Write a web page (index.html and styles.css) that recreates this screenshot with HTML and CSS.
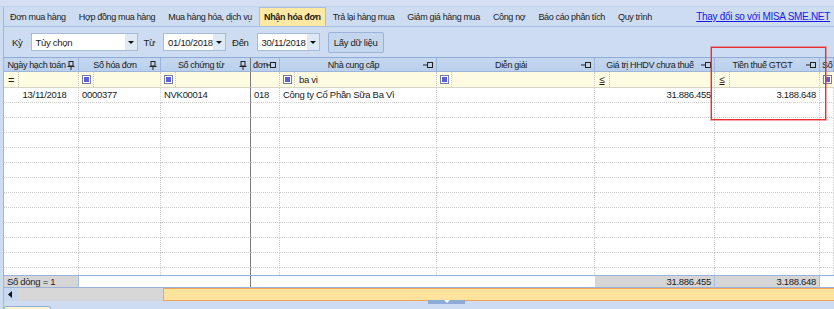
FILE: index.html
```html
<!DOCTYPE html>
<html>
<head>
	<title>Nhận hóa đơn</title>
	<link rel="stylesheet" href="styles.css">
</head>
<body>
	<div class="topStrip"></div>
	<div class="frame">
		<div class="tabs">
			<span class="tab">Đơn mua hàng</span>
			<span class="tab">Hợp đồng mua hàng</span>
			<span class="tab">Mua hàng hóa, dịch vụ</span>
			<span class="tab active">Nhận hóa đơn</span>
			<span class="tab">Trả lại hàng mua</span>
			<span class="tab">Giảm giá hàng mua</span>
			<span class="tab">Công nợ</span>
			<span class="tab">Báo cáo phân tích</span>
			<span class="tab">Quy trình</span>
			<a class="misaLink" href="#">Thay đổi so với MISA SME.NET</a>
		</div>

		<div class="toolbar">
			<label class="lbl">Kỳ</label>
			<div class="combo cKy"><span>Tùy chọn</span><i class="drop"></i></div>
			<label class="lbl">Từ</label>
			<div class="combo cDate"><span>01/10/2018</span><i class="drop"></i></div>
			<label class="lbl">Đến</label>
			<div class="combo cDate"><span>30/11/2018</span><i class="drop"></i></div>
			<button class="btn">Lấy dữ liệu</button>
		</div>

		<div class="grid">
			<div class="row head">
				<div class="hc"><span>Ngày hạch toán</span><svg class="pin" width="8" height="9" viewBox="0 0 8 9"><rect x="2" y="0.5" width="4" height="4.5" fill="none" stroke="#222"/><line x1="0.5" y1="5.5" x2="7.5" y2="5.5" stroke="#222"/><line x1="4" y1="5.5" x2="4" y2="9" stroke="#222"/></svg></div>
				<div class="hc"><span>Số hóa đơn</span><svg class="pin" width="8" height="9" viewBox="0 0 8 9"><rect x="2" y="0.5" width="4" height="4.5" fill="none" stroke="#222"/><line x1="0.5" y1="5.5" x2="7.5" y2="5.5" stroke="#222"/><line x1="4" y1="5.5" x2="4" y2="9" stroke="#222"/></svg></div>
				<div class="hc fix"><span>Số chứng từ</span><svg class="pin" width="8" height="9" viewBox="0 0 8 9"><rect x="2" y="0.5" width="4" height="4.5" fill="none" stroke="#222"/><line x1="0.5" y1="5.5" x2="7.5" y2="5.5" stroke="#222"/><line x1="4" y1="5.5" x2="4" y2="9" stroke="#222"/></svg></div>
				<div class="hc left"><span>đơn</span><svg class="pin" width="10" height="8" viewBox="0 0 10 8"><line x1="0" y1="4" x2="4" y2="4" stroke="#222"/><rect x="4.5" y="1.5" width="5" height="5" fill="none" stroke="#222"/><line x1="4.5" y1="1" x2="4.5" y2="7" stroke="#222"/></svg></div>
				<div class="hc"><span>Nhà cung cấp</span><svg class="pin" width="10" height="8" viewBox="0 0 10 8"><line x1="0" y1="4" x2="4" y2="4" stroke="#222"/><rect x="4.5" y="1.5" width="5" height="5" fill="none" stroke="#222"/><line x1="4.5" y1="1" x2="4.5" y2="7" stroke="#222"/></svg></div>
				<div class="hc"><span>Diễn giải</span><svg class="pin" width="10" height="8" viewBox="0 0 10 8"><line x1="0" y1="4" x2="4" y2="4" stroke="#222"/><rect x="4.5" y="1.5" width="5" height="5" fill="none" stroke="#222"/><line x1="4.5" y1="1" x2="4.5" y2="7" stroke="#222"/></svg></div>
				<div class="hc"><span>Giá trị HHDV chưa thuế</span><svg class="pin" width="10" height="8" viewBox="0 0 10 8"><line x1="0" y1="4" x2="4" y2="4" stroke="#222"/><rect x="4.5" y="1.5" width="5" height="5" fill="none" stroke="#222"/><line x1="4.5" y1="1" x2="4.5" y2="7" stroke="#222"/></svg></div>
				<div class="hc"><span>Tiền thuế GTGT</span><svg class="pin" width="10" height="8" viewBox="0 0 10 8"><line x1="0" y1="4" x2="4" y2="4" stroke="#222"/><rect x="4.5" y="1.5" width="5" height="5" fill="none" stroke="#222"/><line x1="4.5" y1="1" x2="4.5" y2="7" stroke="#222"/></svg></div>
				<div class="hc left"><span>Số</span></div>
			</div>

			<div class="row filter">
				<div class="fc"><b class="op">=</b><i></i></div>
				<div class="fc"><b class="op"><i class="chk"></i></b><i></i></div>
				<div class="fc fix"><b class="op"><i class="chk"></i></b><i></i></div>
				<div class="fc"><i></i></div>
				<div class="fc"><b class="op"><i class="chk"></i></b><i class="val">ba vi</i></div>
				<div class="fc"><b class="op"><i class="chk"></i></b><i></i></div>
				<div class="fc"><b class="op le">≤</b><i></i></div>
				<div class="fc"><b class="op le">≤</b><i></i></div>
				<div class="fc"><b class="op"><i class="chk"></i></b></div>
			</div>

			<div class="gBody">
				<div class="row data">
					<div class="dc ctr">13/11/2018</div>
					<div class="dc">0000377</div>
					<div class="dc fix">NVK00014</div>
					<div class="dc">018</div>
					<div class="dc">Công ty Cổ Phần Sữa Ba Vì</div>
					<div class="dc"></div>
					<div class="dc num">31.886.455</div>
					<div class="dc num">3.188.648</div>
					<div class="dc"></div>
				</div>
				<div class="row data"><div class="dc"></div><div class="dc"></div><div class="dc fix"></div><div class="dc"></div><div class="dc"></div><div class="dc"></div><div class="dc"></div><div class="dc"></div><div class="dc"></div></div>
				<div class="row data"><div class="dc"></div><div class="dc"></div><div class="dc fix"></div><div class="dc"></div><div class="dc"></div><div class="dc"></div><div class="dc"></div><div class="dc"></div><div class="dc"></div></div>
				<div class="row data"><div class="dc"></div><div class="dc"></div><div class="dc fix"></div><div class="dc"></div><div class="dc"></div><div class="dc"></div><div class="dc"></div><div class="dc"></div><div class="dc"></div></div>
				<div class="row data"><div class="dc"></div><div class="dc"></div><div class="dc fix"></div><div class="dc"></div><div class="dc"></div><div class="dc"></div><div class="dc"></div><div class="dc"></div><div class="dc"></div></div>
				<div class="row data"><div class="dc"></div><div class="dc"></div><div class="dc fix"></div><div class="dc"></div><div class="dc"></div><div class="dc"></div><div class="dc"></div><div class="dc"></div><div class="dc"></div></div>
				<div class="row data"><div class="dc"></div><div class="dc"></div><div class="dc fix"></div><div class="dc"></div><div class="dc"></div><div class="dc"></div><div class="dc"></div><div class="dc"></div><div class="dc"></div></div>
				<div class="row data"><div class="dc"></div><div class="dc"></div><div class="dc fix"></div><div class="dc"></div><div class="dc"></div><div class="dc"></div><div class="dc"></div><div class="dc"></div><div class="dc"></div></div>
				<div class="row data"><div class="dc"></div><div class="dc"></div><div class="dc fix"></div><div class="dc"></div><div class="dc"></div><div class="dc"></div><div class="dc"></div><div class="dc"></div><div class="dc"></div></div>
				<div class="row data"><div class="dc"></div><div class="dc"></div><div class="dc fix"></div><div class="dc"></div><div class="dc"></div><div class="dc"></div><div class="dc"></div><div class="dc"></div><div class="dc"></div></div>
				<div class="row data"><div class="dc"></div><div class="dc"></div><div class="dc fix"></div><div class="dc"></div><div class="dc"></div><div class="dc"></div><div class="dc"></div><div class="dc"></div><div class="dc"></div></div>
				<div class="row data"><div class="dc"></div><div class="dc"></div><div class="dc fix"></div><div class="dc"></div><div class="dc"></div><div class="dc"></div><div class="dc"></div><div class="dc"></div><div class="dc"></div></div>
				<div class="row data"><div class="dc"></div><div class="dc"></div><div class="dc fix"></div><div class="dc"></div><div class="dc"></div><div class="dc"></div><div class="dc"></div><div class="dc"></div><div class="dc"></div></div>
			</div>

			<div class="row foot">
				<div class="tc sum">Số dòng = 1</div>
				<div class="tc"></div>
				<div class="tc fix"></div>
				<div class="tc"></div>
				<div class="tc"></div>
				<div class="tc"></div>
				<div class="tc sum num">31.886.455</div>
				<div class="tc sum num">3.188.648</div>
				<div class="tc"></div>
			</div>

			<div class="hScroll">
				<div class="arrowBtn"><svg width="5" height="7" viewBox="0 0 5 7"><polygon points="4,0 4,7 0,3.5" fill="#111"/></svg></div>
				<div class="track"></div>
				<div class="thumb"></div>
			</div>
		</div>

		<div class="bottomBar">
			<div class="pageTab"></div>
			<div class="splitter"><svg width="6" height="3" viewBox="0 0 6 3"><polygon points="0,0 6,0 3,3" fill="#fff"/></svg></div>
		</div>
	</div>

	<div class="highlight"></div>
</body>
</html>
```

FILE: styles.css
```css
body{
	margin: 0;
	background: #cddcf0;
	font-family: "Liberation Sans", Arial, sans-serif;
	font-size: 9.5px;
	letter-spacing: -0.3px;
	color: #1b1b1b;
	width: 834px;
	height: 309px;
	overflow: hidden;
	position: relative;
}
.topStrip{
	height: 6px;
	background: #d4e0f1;
	border-bottom: 1px solid #c2d2e9;
}
.frame{
	margin-left: 3px;
	border-left: 1px solid #9fb7dd;
}

/* tab strip */
.tabs{
	display: flex;
	align-items: stretch;
	height: 19px;
	border-bottom: 1px solid #a6bde0;
	font-size: 9px;
	letter-spacing: -0.35px;
}
.tab{
	display: flex;
	align-items: center;
	padding: 0 6px;
	margin-right: 1px;
	white-space: nowrap;
}
.tab.active{
	background: #fde8a4;
	border: 1px solid #a9bfe2;
	border-bottom: none;
	font-weight: bold;
	padding: 0 4px;
}
.misaLink{
	margin-left: auto;
	margin-right: 4px;
	flex-shrink: 0;
	align-self: center;
	color: #1a1ae6;
	font-size: 10px;
	letter-spacing: -0.3px;
	text-decoration: underline;
	white-space: nowrap;
}

/* filter toolbar */
.toolbar{
	display: flex;
	align-items: center;
	height: 30px;
	padding-left: 8px;
}
.lbl{
	margin-right: 8px;
}
.combo{
	display: flex;
	align-items: center;
	height: 18px;
	box-sizing: border-box;
	background: #fff;
	border: 1px solid #a8bcd9;
	padding-left: 4px;
	margin-right: 6px;
}
.combo span{
	flex: 1;
}
.cKy{ width: 107px; }
.cDate{ width: 63px; }
.drop{
	width: 12px;
	height: 16px;
	background: #dfe8f5;
	position: relative;
}
.drop:after{
	content: "";
	position: absolute;
	left: 3px;
	top: 7px;
	border-left: 3px solid transparent;
	border-right: 3px solid transparent;
	border-top: 3px solid #111;
}
.btn{
	margin-left: 2px;
	height: 21px;
	width: 56px;
	padding: 0;
	background: #c5d7ef;
	border: 1px solid #9bb3d8;
	border-radius: 2px;
	font-family: inherit;
	font-size: inherit;
	letter-spacing: inherit;
	color: #1b1b1b;
}

/* data grid */
.grid{
	border-top: 1px solid #8eaad6;
	background: #fff;
}
.row{
	display: grid;
	grid-template-columns: 75px 82px 90px 29px 157px 158px 120px 105px 1fr;
}
.hc{
	height: 13px;
	display: flex;
	align-items: center;
	justify-content: center;
	position: relative;
	padding-right: 9px;
	background: linear-gradient(#c6d8f0, #b9cfec);
	border-right: 1px solid #9db5da;
	border-bottom: 1px solid #9db5da;
	font-size: 9px;
	letter-spacing: -0.35px;
	white-space: nowrap;
	overflow: hidden;
}
.hc.left{
	justify-content: flex-start;
	padding-left: 2px;
}
.hc .pin{
	position: absolute;
	right: 3px;
	top: 3px;
}
.fix{
	border-right: 1px solid #7b7b7b !important;
}
.fc{
	height: 15px;
	display: flex;
	align-items: center;
	background: #fdfbe1;
	border-right: 1px dotted #c9c9c9;
	border-bottom: 1px solid #d6d6c4;
}
.fc .op{
	width: 14px;
	height: 15px;
	display: flex;
	align-items: center;
	justify-content: center;
	border-right: 1px dotted #c9c9c9;
	font-weight: normal;
	font-size: 11px;
}
.fc .op.le{
	text-decoration: underline;
	font-size: 10px;
}
.fc .val{
	font-style: normal;
	padding-left: 4px;
}
.chk{
	display: block;
	width: 7px;
	height: 7px;
	border: 1px solid #72809d;
	background: #5b5fd8;
	box-shadow: inset 0 0 0 1px #fff;
}
.gBody{
	height: 187px;
	overflow: hidden;
}
.dc{
	height: 14px;
	line-height: 14px;
	padding: 0 3px;
	border-right: 1px dotted #cfcfcf;
	border-bottom: 1px dotted #cfcfcf;
	white-space: nowrap;
	overflow: hidden;
}
.dc.ctr{
	text-align: center;
	padding-left: 10px;
}
.num{
	text-align: right;
}
.foot{
	border-top: 1px solid #9ab3da;
}
.tc{
	height: 11px;
	line-height: 11px;
	padding: 0 3px;
	background: #fff;
	white-space: nowrap;
}
.tc.sum{
	background: #d6d6d6;
	border-right: 1px solid #a9bedf;
}
.hScroll{
	display: flex;
	height: 13px;
	border-top: 1px solid #9ab3da;
}
.arrowBtn{
	width: 13px;
	display: flex;
	align-items: center;
	justify-content: center;
	background: #c6d7ef;
}
.track{
	width: 146px;
	background: #d7d7d7;
}
.thumb{
	flex: 1;
	background: #fee39c;
	border-top: 1px solid #f0a35c;
	border-left: 1px solid #f0a35c;
	border-bottom: 1px solid #f0a35c;
}
.bottomBar{
	height: 10px;
	position: relative;
}
.pageTab{
	position: absolute;
	left: 0;
	top: 5px;
	width: 45px;
	height: 8px;
	background: #fbf3d0;
	border: 1px solid #93b0da;
	border-radius: 2px 2px 0 0;
}
.splitter{
	position: absolute;
	left: 424px;
	top: -1px;
	width: 37px;
	height: 4px;
	background: #8eaad6;
	display: flex;
	justify-content: center;
}

/* annotation box */
.highlight{
	position: absolute;
	left: 711px;
	top: 47px;
	width: 113px;
	height: 71px;
	border: 1px solid #e83030;
	box-shadow: 0 0 0 1px rgba(232, 60, 60, 0.45);
	pointer-events: none;
}
```
